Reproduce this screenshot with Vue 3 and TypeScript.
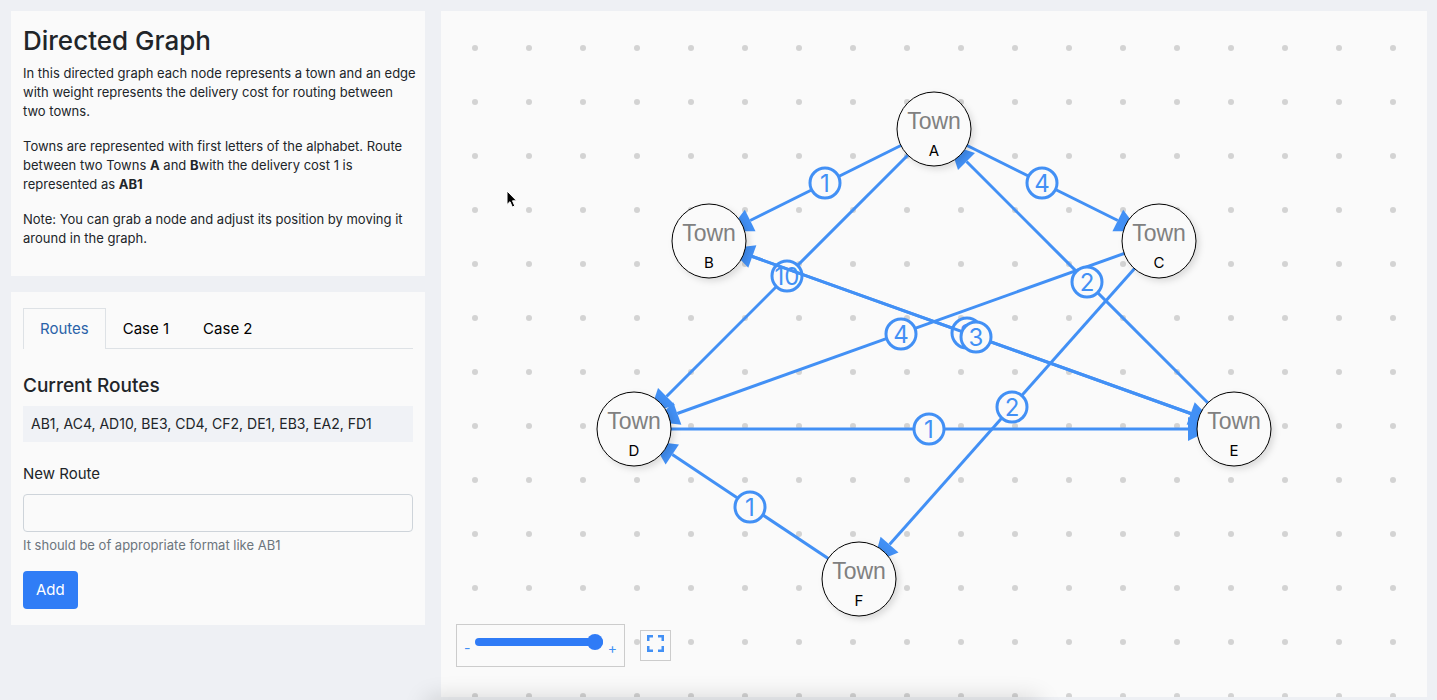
<script setup lang="ts">
import { computed, ref } from 'vue'

interface Town { id: string; x: number; y: number }
interface Edge { from: string; to: string; weight: number; lx: number; ly: number }

const tabs = ['Routes', 'Case 1', 'Case 2']
const activeTab = ref('Routes')
const newRoute = ref('')
const zoom = ref(100)

const towns: Town[] = [
  { id: 'A', x: 493, y: 118 },
  { id: 'B', x: 268, y: 230 },
  { id: 'C', x: 718, y: 230 },
  { id: 'D', x: 193, y: 418 },
  { id: 'E', x: 793, y: 418 },
  { id: 'F', x: 418, y: 568 },
]

const edges = ref<Edge[]>([
  { from: 'A', to: 'B', weight: 1, lx: 384, ly: 172 },
  { from: 'A', to: 'C', weight: 4, lx: 601, ly: 172 },
  { from: 'A', to: 'D', weight: 10, lx: 346, ly: 265 },
  { from: 'B', to: 'E', weight: 3, lx: 526, ly: 322 },
  { from: 'C', to: 'D', weight: 4, lx: 460, ly: 323 },
  { from: 'C', to: 'F', weight: 2, lx: 571, ly: 396 },
  { from: 'D', to: 'E', weight: 1, lx: 488, ly: 418 },
  { from: 'E', to: 'B', weight: 3, lx: 535, ly: 326 },
  { from: 'E', to: 'A', weight: 2, lx: 646, ly: 271 },
  { from: 'F', to: 'D', weight: 1, lx: 309, ly: 496 },
])

const routes = computed(() => edges.value.map(e => `${e.from}${e.to}${e.weight}`).join(', '))

const find = (id: string) => towns.find(t => t.id === id)!

const drawn = computed(() =>
  edges.value.map(e => {
    const a = find(e.from)
    const b = find(e.to)
    const len = Math.hypot(b.x - a.x, b.y - a.y)
    const ux = (b.x - a.x) / len
    const uy = (b.y - a.y) / len
    const bx = b.x - ux * 46
    const by = b.y - uy * 46
    const tip = `${b.x - ux * 22},${b.y - uy * 22}`
    const arrow = `${bx - uy * 12},${by + ux * 12} ${tip} ${bx + uy * 12},${by - ux * 12}`
    return { ...e, a, bx, by, arrow }
  }),
)

function addRoute() {
  const m = /^([A-F])([A-F])(\d+)$/.exec(newRoute.value.trim())
  if (!m || m[1] === m[2]) return
  const a = find(m[1])
  const b = find(m[2])
  edges.value.push({ from: m[1], to: m[2], weight: Number(m[3]), lx: (a.x + b.x) / 2, ly: (a.y + b.y) / 2 })
  newRoute.value = ''
}
</script>

<template>
  <div class="page">
    <aside class="side">
      <section class="card intro">
        <h1>Directed Graph</h1>
        <p>In this directed graph each node represents a town and an edge with weight represents the delivery cost for routing between two towns.</p>
        <p>Towns are represented with first letters of the alphabet. Route between two Towns <b>A</b> and <b>B</b>with the delivery cost 1 is represented as <b>AB1</b></p>
        <p>Note: You can grab a node and adjust its position by moving it around in the graph.</p>
      </section>

      <section class="card">
        <nav class="tabs" role="tablist">
          <button
            v-for="t in tabs"
            :key="t"
            type="button"
            role="tab"
            class="tab"
            :class="{ active: t === activeTab }"
            :aria-selected="t === activeTab"
            @click="activeTab = t"
          >{{ t }}</button>
        </nav>
        <h2>Current Routes</h2>
        <div class="routes">{{ routes }}</div>
        <form @submit.prevent="addRoute">
          <label for="route">New Route</label>
          <input id="route" v-model="newRoute" type="text" class="field" aria-describedby="hint" />
          <small id="hint">It should be of appropriate format like AB1</small>
          <button type="submit" class="add">Add</button>
        </form>
      </section>
    </aside>

    <main class="graph">
      <svg class="canvas" role="img" aria-label="Town routes">
        <defs>
          <pattern id="dots" x="7" y="10" width="54" height="54" patternUnits="userSpaceOnUse">
            <circle cx="27" cy="27" r="3" fill="#d3d3d3" />
          </pattern>
        </defs>
        <rect width="100%" height="100%" fill="url(#dots)" />
        <g v-for="(e, i) in drawn" :key="i" class="edge">
          <line :x1="e.a.x" :y1="e.a.y" :x2="e.bx" :y2="e.by" />
          <polygon :points="e.arrow" />
          <circle :cx="e.lx" :cy="e.ly" r="15" />
          <text :x="e.lx" :y="e.ly + 9">{{ e.weight }}</text>
        </g>
        <g v-for="t in towns" :key="t.id" class="node">
          <circle :cx="t.x" :cy="t.y" r="37" />
          <text class="kind" :x="t.x" :y="t.y">Town</text>
          <text class="name" :x="t.x" :y="t.y + 27">{{ t.id }}</text>
        </g>
      </svg>

      <div class="controls">
        <div class="zoom">
          <span>-</span>
          <input v-model="zoom" type="range" min="0" max="100" aria-label="Zoom" />
          <span>+</span>
        </div>
        <button type="button" class="fit" aria-label="Fit to screen">
          <svg width="17" height="17" viewBox="0 0 17 17">
            <path d="M1 6V1H6 M11 1H16V6 M16 11V16H11 M6 16H1V11" />
          </svg>
        </button>
      </div>

      <svg class="pointer" width="12" height="19" viewBox="0 0 12 19" aria-hidden="true">
        <path d="M1 1V14.500L4 11.700L6.300 17L8.800 16L6.500 10.800H10.600Z" />
      </svg>
    </main>
  </div>
</template>

<style>
body {
  margin: 0;
  background: #eef0f4;
}
</style>

<style scoped>
* {
  box-sizing: border-box;
}

.page {
  display: grid;
  grid-template-columns: minmax(0, 21fr) minmax(0, 50fr);
  gap: 16px;
  min-height: 100vh;
  padding: 11px 10px 3px 11px;
  color: #212529;
  font: 400 15px/24px Inter, "Liberation Sans", sans-serif;
}

/* soft shadow rising from the bottom edge of the window */
.page::after {
  content: "";
  position: fixed;
  right: 28%;
  bottom: -12px;
  left: 30%;
  height: 8px;
  box-shadow: 0 0 24px 4px rgba(0, 0, 0, 0.2);
  pointer-events: none;
}

.side {
  display: flex;
  flex-direction: column;
  align-items: stretch;
  gap: 16px;
}

.card {
  padding: 16px 12px;
  background: #fafafa;
}

.intro {
  padding: 12px 8px 12px 12px;
}

h1 {
  margin: 0 0 6px;
  font-size: 26px;
  font-weight: 500;
  line-height: 35px;
}

p {
  margin: 0 0 16px;
  font-size: 13px;
  line-height: 19px;
}

.tabs {
  display: flex;
  border-bottom: 1px solid #dee2e6;
}

.tab {
  height: 40px;
  padding: 0 16px;
  border: 1px solid transparent;
  border-bottom: 0;
  background: none;
  color: #000;
  font: inherit;
}

.tab.active {
  height: 41px;
  margin-bottom: -1px;
  border-color: #dee2e6;
  background: #fafafa;
  color: #2a62a8;
}

h2 {
  margin: 25px 0 8px;
  font-size: 19px;
  font-weight: 500;
  line-height: 24px;
}

.routes {
  padding: 7px 8px;
  background: #f0f2f6;
  font-size: 14px;
  line-height: 22px;
}

form {
  display: flex;
  flex-direction: column;
  align-items: flex-start;
  margin-top: 20px;
}

.field {
  width: 100%;
  height: 38px;
  margin: 8px 0 4px;
  padding: 6px 12px;
  border: 1px solid #ced4da;
  border-radius: 4px;
  background: #fafafa;
  font: inherit;
}

small {
  color: #6c757d;
  font-size: 13px;
  line-height: 19px;
}

.add {
  height: 38px;
  margin-top: 16px;
  padding: 0 13px;
  border: 0;
  border-radius: 4px;
  background: #307df6;
  color: #fff;
  font: inherit;
}

.graph {
  position: relative;
  background: #fafafa;
}

.canvas {
  position: absolute;
  inset: 0;
  width: 100%;
  height: 100%;
}

.edge line {
  stroke: #4290f5;
  stroke-width: 3;
}

.edge polygon {
  fill: #4290f5;
}

.edge circle {
  fill: #fafafa;
  stroke: #4290f5;
  stroke-width: 3;
}

.edge text {
  fill: #4290f5;
  font-size: 24px;
  text-anchor: middle;
}

.node circle {
  fill: #fafafa;
  stroke: #000;
  stroke-width: 1;
  filter: drop-shadow(3px 3px 3px rgba(0, 0, 0, 0.12));
}

.node text {
  text-anchor: middle;
}

.kind {
  fill: #808080;
  font-family: "Liberation Sans", sans-serif;
  font-size: 23px;
}

.name {
  fill: #000;
  font-size: 15px;
}

.controls {
  position: absolute;
  bottom: 30px;
  left: 15px;
  display: flex;
  align-items: center;
  gap: 15px;
}

.zoom {
  display: flex;
  justify-content: space-between;
  width: 169px;
  height: 43px;
  padding: 9px 7px;
  border: 1px solid #ccc;
  background: #fafafa;
  color: #4290f5;
  font-size: 14px;
  line-height: 16px;
}

.zoom span {
  padding-top: 6px;
}

.zoom input {
  width: 128px;
  height: 16px;
  margin: 0;
  background: none;
  appearance: none;
}

.zoom input::-webkit-slider-runnable-track {
  height: 8px;
  border-radius: 4px;
  background: #2f7bf6;
}

.zoom input::-webkit-slider-thumb {
  width: 16px;
  height: 16px;
  margin-top: -4px;
  border-radius: 50%;
  background: #2f7bf6;
  appearance: none;
}

.fit {
  display: flex;
  justify-content: center;
  width: 31px;
  height: 31px;
  padding: 4px 0;
  border: 1px solid #ccc;
  background: #fafafa;
}

.fit path {
  fill: none;
  stroke: #4290f5;
  stroke-width: 3;
}

.pointer {
  position: absolute;
  top: 179px;
  left: 65px;
}

.pointer path {
  fill: #000;
  stroke: #fff;
  stroke-width: 1;
}
</style>
